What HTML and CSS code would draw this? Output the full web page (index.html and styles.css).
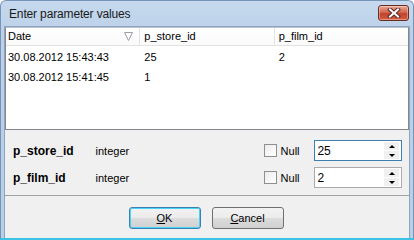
FILE: index.html
```html
<!DOCTYPE html>
<html>
<head>
<meta charset="utf-8">
<link rel="stylesheet" href="styles.css">
</head>
<body>
<div class="window">
  <div class="titlebar">
    <span class="title">Enter parameter values</span>
    <div class="close">
      <svg width="14" height="10" viewBox="0 0 14 10"><path d="M3 1.5 L11 8.5 M11 1.5 L3 8.5" stroke="#5a2a24" stroke-width="4" stroke-linecap="square"/><path d="M3 1.5 L11 8.5 M11 1.5 L3 8.5" stroke="#fff" stroke-width="2" stroke-linecap="square"/></svg>
    </div>
  </div>
  <div class="client">
    <div class="grid">
      <div class="ghead">
        <div class="hc c1">Date<svg class="filter" width="9" height="9" viewBox="0 0 9 9"><path d="M0.5 0.5 H8.5 L4.5 8.5 Z" fill="none" stroke="#9aa0a8"/></svg></div>
        <div class="hc c2">p_store_id</div>
        <div class="hc c3">p_film_id</div>
      </div>
      <div class="grow">
        <div class="cell c1">30.08.2012 15:43:43</div>
        <div class="cell c2">25</div>
        <div class="cell c3">2</div>
      </div>
      <div class="grow">
        <div class="cell c1">30.08.2012 15:41:45</div>
        <div class="cell c2">1</div>
        <div class="cell c3"></div>
      </div>
    </div>
    <div class="params">
      <div class="prow">
        <span class="pname">p_store_id</span>
        <span class="ptype">integer</span>
        <span class="chk"></span><span class="null">Null</span>
        <div class="spin focused"><span class="sval">25</span><div class="sbtns"><span class="sb"><i class="up"></i></span><span class="sb"><i class="dn"></i></span></div></div>
      </div>
      <div class="prow">
        <span class="pname">p_film_id</span>
        <span class="ptype">integer</span>
        <span class="chk"></span><span class="null">Null</span>
        <div class="spin"><span class="sval">2</span><div class="sbtns"><span class="sb"><i class="up"></i></span><span class="sb"><i class="dn"></i></span></div></div>
      </div>
    </div>
    <div class="buttons">
      <button class="btn default"><u>O</u>K</button>
      <button class="btn"><u>C</u>ancel</button>
    </div>
  </div>
</div>
</body>
</html>
```
FILE: styles.css
```css
html, body { margin: 0; padding: 0; }
body { width: 414px; height: 240px; overflow: hidden; font-family: "Liberation Sans", Arial, sans-serif; font-size: 11px; color: #000; }
.window {
  width: 414px; height: 240px; box-sizing: border-box;
  background: linear-gradient(#c6d9ee, #bcd1e9 30px, #b8cfe8);
  border: 1px solid #7495b8;
  border-bottom: 2px solid #39c3e6;
  border-radius: 6px 6px 0 0;
  padding: 0 3px 0 3px;
  display: flex; flex-direction: column;
}
.titlebar { height: 25px; flex: none; display: flex; align-items: flex-start; justify-content: space-between; padding-left: 5px; }
.title { font-family: "Liberation Sans", Arial, sans-serif; font-size: 12px; letter-spacing: -0.15px; color: #1a1a1a; margin-top: 6px; }
.close {
  width: 31px; height: 16px; box-sizing: border-box; margin-right: 1px; margin-top: 4px;
  border: 1px solid #6b2a22; border-radius: 3px;
  background: linear-gradient(#e9a897, #d4674f 45%, #c1432d 55%, #d25d42);
  display: flex; align-items: center; justify-content: center;
  box-shadow: inset 0 0 0 1px rgba(255,255,255,0.35);
}
.client { flex: 1; background: #f0f0f0; border: 1px solid #8fa5bd; border-bottom: none; display: flex; flex-direction: column; }
.grid { height: 101px; flex: none; background: #fff; border: 1px solid #828790; border-top: 1px solid #b9c5d3; }
.ghead { height: 17px; display: flex; border-bottom: 1px solid #e3e3e3; background: linear-gradient(#fff, #fafafa); }
.hc { box-sizing: border-box; padding-left: 2px; line-height: 17px; border-right: 1px solid #e3e3e3; position: relative; font-size: 11px; }
.c1 { width: 135px; }
.c2 { width: 135px; padding-left: 4px; }
.c3 { width: 134px; padding-left: 4px; border-right: none; }
.filter { position: absolute; right: 6px; top: 4px; }
.grow { display: flex; height: 20px; }
.grow:first-of-type { margin-top: 1px; }
.cell { box-sizing: border-box; padding-left: 2px; padding-top: 1px; line-height: 20px; font-size: 11px; }
.grow .c2, .grow .c3 { padding-left: 4px; }
.params { flex: none; height: 66px; box-sizing: border-box; padding: 10px 7px 0 8px; border-bottom: 1px solid #a0a0a0; display: flex; flex-direction: column; gap: 6px; }
.prow { display: flex; align-items: center; height: 21px; }
.pname { width: 83px; font-weight: bold; font-size: 12px; }
.ptype { width: 169px; }
.chk { width: 11px; height: 11px; border: 1px solid #8f8f8f; background: linear-gradient(135deg, #ececec, #fff); margin-right: 4px; }
.null { width: 34px; }
.spin { width: 88px; height: 21px; box-sizing: border-box; border: 1px solid #ababab; background: #fff; display: flex; align-items: center; justify-content: space-between; padding-left: 2px; }
.spin.focused { border-color: #3c7fb1; }
.sval { font-size: 12px; }
.sbtns { display: flex; flex-direction: column; gap: 1px; margin-right: 2px; }
.sb { width: 15px; height: 8px; background: #f0f0f0; display: flex; align-items: center; justify-content: center; }
.sb i { display: block; width: 0; height: 0; border-left: 3px solid transparent; border-right: 3px solid transparent; }
.sb i.up { border-bottom: 3px solid #000; }
.sb i.dn { border-top: 3px solid #000; }
.buttons { flex: 1; display: flex; justify-content: center; align-items: flex-start; gap: 11px; padding-top: 11px; padding-right: 2px; }
.btn { width: 72px; height: 22px; box-sizing: border-box; border: 1px solid #707070; border-radius: 3px; background: linear-gradient(#f2f2f2, #ebebeb 50%, #dddddd 51%, #cfcfcf); font-family: "Liberation Sans", Arial, sans-serif; font-size: 11px; color: #000; padding: 0; }
.btn.default { border-color: #3c7fb1; box-shadow: inset 0 0 0 1px #48d3f8; }
```
